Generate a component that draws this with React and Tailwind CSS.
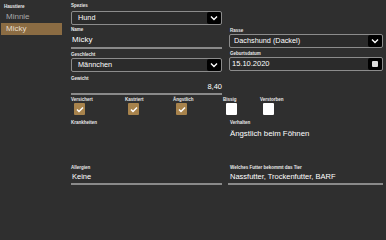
import { useState } from "react";

const font = { fontFamily: '"Liberation Sans", Arial, sans-serif' };

function Label({ children, className = "" }) {
  return (
    <div className={"text-[4.5px] leading-[5px] font-bold text-[#e8e8e8] " + className}>
      {children}
    </div>
  );
}

function Chevron() {
  return (
    <svg width="8" height="6" viewBox="0 0 8 6">
      <path d="M1 1.5 L4 4.5 L7 1.5" fill="none" stroke="white" strokeWidth="1.4" />
    </svg>
  );
}

function SelectBox({ value, textClass = "pl-[6px]" }) {
  return (
    <div className="flex h-[14px] items-stretch rounded-[2px] border border-[#8c8c8c] bg-[#2b2b2b]">
      <div className={"flex flex-1 items-center text-[7.3px] text-white " + textClass}>{value}</div>
      <div className="flex w-[14px] items-center justify-center rounded-[2px] bg-black">
        <Chevron />
      </div>
    </div>
  );
}

function LineInput({ value, className = "" }) {
  return (
    <div className={"border-b-2 border-[#8a8a8a] text-[7.5px] leading-[10px] text-white " + className}>
      {value}
    </div>
  );
}

function Check({ label, checked }) {
  return (
    <div className="flex flex-col">
      <Label>{label}</Label>
      <div
        className={
          "ml-[3px] mt-[1px] flex h-[12px] w-[11px] items-center justify-center rounded-[1px] " +
          (checked ? "bg-[#a8834c]" : "bg-white")
        }
      >
        {checked && (
          <svg width="8" height="7" viewBox="0 0 8 7">
            <path d="M1 3.5 L3 5.5 L7 1.5" fill="none" stroke="white" strokeWidth="1.5" />
          </svg>
        )}
      </div>
    </div>
  );
}

export default function App() {
  const [pets] = useState(["Minnie", "Micky"]);
  const selected = "Micky";

  return (
    <div className="flex h-[240px] w-[386px] overflow-hidden bg-[#2f2f2f]" style={font}>
      <aside className="w-[63px] shrink-0 pt-[4px]">
        <Label className="pl-[4px]">Haustiere</Label>
        <div className="mt-[2px]">
          {pets.map((p) => (
            <div
              key={p}
              className={
                "ml-[1px] flex h-[12px] w-[61px] items-center pl-[5px] text-[8px] " +
                (p === selected ? "bg-[#8b6c43] text-[#e6dccb]" : "text-[#a9a9a9]")
              }
            >
              {p}
            </div>
          ))}
        </div>
      </aside>

      <main className="flex-1 pl-[8px] pr-[3px] pt-[3px]">
        <div className="grid grid-cols-[151px_154px] gap-x-[7px]">
          {/* Spezies */}
          <div className="h-[23px]">
            <Label>Spezies</Label>
            <div className="mt-[3px]">
              <SelectBox value="Hund" />
            </div>
          </div>
          <div />

          {/* Name / Rasse */}
          <div className="h-[24px] pt-[1px]">
            <Label>Name</Label>
            <LineInput value="Micky" className="mt-[3px] pb-[2px] pl-[1px] text-[8px]" />
          </div>
          <div className="h-[24px] pt-[2px] pl-[1px]">
            <Label>Rasse</Label>
            <div className="-ml-[1px] mt-[1px]">
              <SelectBox value="Dachshund (Dackel)" textClass="pl-[4px]" />
            </div>
          </div>

          {/* Geschlecht / Geburtsdatum */}
          <div className="h-[23px] pt-[2px]">
            <Label>Geschlecht</Label>
            <div className="mt-[1px]">
              <SelectBox value="Männchen" />
            </div>
          </div>
          <div className="h-[23px] pt-[1px] pl-[1px]">
            <Label>Geburtsdatum</Label>
            <div className="-ml-[1px] mt-[1px] flex h-[14px] items-stretch rounded-[2px] border border-[#8c8c8c] bg-[#2b2b2b]">
              <div className="flex flex-1 items-center pl-[2px] text-[7.5px] text-white">15.10.2020</div>
              <div className="flex w-[14px] items-center justify-center rounded-[2px] bg-black">
                <div className="h-[6px] w-[6px] rounded-[1px] bg-[#dcdcdc]" />
              </div>
            </div>
          </div>

          {/* Gewicht */}
          <div className="h-[20px] pt-[3px]">
            <Label>Gewicht</Label>
            <LineInput value="8,40" className="mt-[1px] pb-[1px] text-right" />
          </div>
          <div />
        </div>

        {/* Checkboxes */}
        <div className="mt-[4px] flex">
          <div className="w-[54px]">
            <Check label="Versichert" checked />
          </div>
          <div className="w-[48px]">
            <Check label="Kastriert" checked />
          </div>
          <div className="w-[50px]">
            <Check label="Ängstlich" checked />
          </div>
          <div className="w-[37px]">
            <Check label="Bissig" />
          </div>
          <div>
            <Check label="Verstorben" />
          </div>
        </div>

        <div className="mt-[5px] grid grid-cols-[151px_154px] gap-x-[7px]">
          <div className="h-[45px]">
            <Label>Krankheiten</Label>
          </div>
          <div className="h-[45px] pl-[1px]">
            <Label>Verhalten</Label>
            <div className="mt-[4px] text-[7.8px] leading-[10px] text-white">Ängstlich beim Föhnen</div>
          </div>

          <div>
            <Label>Allergien</Label>
            <LineInput value="Keine" className="mt-[2px] pb-[1px] pl-[1px]" />
          </div>
          <div className="pl-[1px]">
            <Label>Welches Futter bekommt das Tier</Label>
            <LineInput value="Nassfutter, Trockenfutter, BARF" className="-ml-[2px] mt-[2px] pb-[1px] pl-[2px] text-[6.8px]" />
          </div>
        </div>
      </main>
    </div>
  );
}
